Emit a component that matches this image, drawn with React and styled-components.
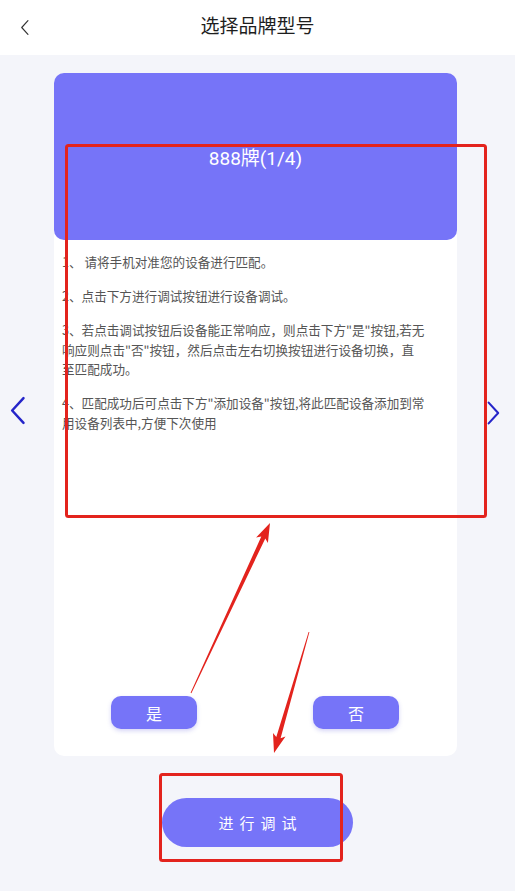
import React from 'react'
import styled, { createGlobalStyle } from 'styled-components'

const GlobalStyle = createGlobalStyle`
  html, body {
    margin: 0;
    padding: 0;
    background: #f4f5fa;
  }
  body {
    font-family: "Noto Sans CJK SC", "Noto Sans", Roboto, sans-serif;
  }
`

// each step keeps the line breaks of the device screen
const steps = [
  ['1、 请将手机对准您的设备进行匹配。'],
  ['2、点击下方进行调试按钮进行设备调试。'],
  [
    '3、若点击调试按钮后设备能正常响应，则点击下方"是"按钮,若无',
    '响应则点击"否"按钮，然后点击左右切换按钮进行设备切换，直',
    '至匹配成功。',
  ],
  ['4、匹配成功后可点击下方"添加设备"按钮,将此匹配设备添加到常', '用设备列表中,方便下次使用'],
]

// tapered annotation arrow, thin at the tail, head at the tip
function arrowPoints(x1, y1, x2, y2) {
  const dx = x2 - x1
  const dy = y2 - y1
  const len = Math.hypot(dx, dy)
  const ux = dx / len
  const uy = dy / len
  const nx = -uy
  const ny = ux
  const headLen = 19
  const headW = 6.5
  const bx = x2 - ux * headLen
  const by = y2 - uy * headLen
  const tailW = 0.4
  const neckW = 2.2
  const pts = [
    [x1 + nx * tailW, y1 + ny * tailW],
    [bx + ux * 3 + nx * neckW, by + uy * 3 + ny * neckW],
    [bx + nx * headW, by + ny * headW],
    [x2, y2],
    [bx - nx * headW, by - ny * headW],
    [bx + ux * 3 - nx * neckW, by + uy * 3 - ny * neckW],
    [x1 - nx * tailW, y1 - ny * tailW],
  ]
  return pts.map((p) => p.map((v) => v.toFixed(1)).join(',')).join(' ')
}

function Chevron({ dir = 'left', size = 30, color = '#2525c9', width = 2.4 }) {
  const d = dir === 'left' ? 'M14 3 L3 15 L14 27' : 'M3 3 L14 15 L3 27'
  return (
    <svg width={size * 0.57} height={size} viewBox="0 0 17 30" fill="none">
      <path d={d} stroke={color} strokeWidth={width} strokeLinecap="round" strokeLinejoin="round" />
    </svg>
  )
}

export default function App() {
  return (
    <Page>
      <GlobalStyle />
      <Header>
        <BackButton>
          <Chevron dir="left" size={17} color="#333" width={2} />
        </BackButton>
        <Title>选择品牌型号</Title>
        <span />
      </Header>

      <Stage>
        <SideNav>
          <Chevron dir="left" size={31} />
        </SideNav>

        <Card>
          <Banner>888牌(1/4)</Banner>
          <Steps>
            {steps.map((lines, i) => (
              <Step key={i}>
                {lines.map((l, j) => (
                  <React.Fragment key={j}>
                    {j > 0 && <br />}
                    {l}
                  </React.Fragment>
                ))}
              </Step>
            ))}
          </Steps>
          <Choices>
            <ChoiceButton>是</ChoiceButton>
            <ChoiceButton>否</ChoiceButton>
          </Choices>
        </Card>

        <SideNav $right>
          <Chevron dir="right" size={26} />
        </SideNav>
      </Stage>

      <Footer>
        <DebugButton>进行调试</DebugButton>
      </Footer>

      <Annotations viewBox="0 0 515 891" width="515" height="891">
        <rect x="66.5" y="145.5" width="419" height="371" rx="2" fill="none" stroke="#e3231d" strokeWidth="3" />
        <rect x="160.5" y="774.5" width="181" height="86" rx="2" fill="none" stroke="#e3231d" strokeWidth="3" />
        <polygon points={arrowPoints(191, 693, 270, 523)} fill="#e3231d" />
        <polygon points={arrowPoints(309, 632, 274, 753)} fill="#e3231d" />
      </Annotations>
    </Page>
  )
}

const Page = styled.div`
  position: relative;
  width: 515px;
  min-height: 891px;
  background: #f4f5fa;
  overflow: hidden;
`

const Header = styled.header`
  height: 55px;
  background: #ffffff;
  display: grid;
  grid-template-columns: 50px 1fr 50px;
  align-items: center;
`

const BackButton = styled.div`
  display: flex;
  align-items: center;
  justify-content: center;
  padding-bottom: 1px;
`

const Title = styled.h1`
  margin: 0;
  text-align: center;
  font-size: 19px;
  font-weight: 400;
  color: #1e1e1e;
  padding-bottom: 6px;
`

const Stage = styled.main`
  display: grid;
  grid-template-columns: 54px 403px 58px;
  padding-top: 18px;
`

const SideNav = styled.div`
  display: flex;
  align-items: center;
  padding-left: ${(p) => (p.$right ? '29px' : '9px')};
  margin-top: ${(p) => (p.$right ? '-4px' : '-8px')};
`

const Card = styled.section`
  height: 683px;
  background: #ffffff;
  border-radius: 10px;
  display: flex;
  flex-direction: column;
`

const Banner = styled.div`
  height: 167px;
  background: #7674f8;
  border-radius: 10px;
  display: flex;
  align-items: center;
  justify-content: center;
  color: #ffffff;
  font-family: Roboto, "Noto Sans CJK SC", sans-serif;
  font-size: 19px;
  flex-shrink: 0;
`

const Steps = styled.div`
  padding: 12px 2px 0 8px;
  color: #555555;
  font-size: 12.6px;
  line-height: 19.5px;
  white-space: nowrap;
`

const Step = styled.p`
  margin: 0 0 14.5px 0;
`

const Choices = styled.div`
  margin-top: auto;
  display: flex;
  justify-content: space-between;
  padding: 0 58px 27px 57px;
`

const ChoiceButton = styled.button`
  width: 86px;
  height: 33px;
  border: none;
  border-radius: 10px;
  background: #7674f8;
  color: #ffffff;
  font-family: "Noto Sans CJK SC", sans-serif;
  font-size: 16px;
  box-shadow: 0 2px 4px rgba(90, 88, 220, 0.25);
  padding: 0;
`

const Footer = styled.div`
  display: flex;
  justify-content: center;
  padding-top: 42px;
`

const DebugButton = styled.button`
  width: 191px;
  height: 49px;
  border: none;
  border-radius: 25px;
  background: #7674f8;
  color: #ffffff;
  font-family: "Noto Sans CJK SC", sans-serif;
  font-size: 15px;
  letter-spacing: 6px;
  text-indent: 6px;
  padding: 0;
`

const Annotations = styled.svg`
  position: absolute;
  left: 0;
  top: 0;
  pointer-events: none;
`
